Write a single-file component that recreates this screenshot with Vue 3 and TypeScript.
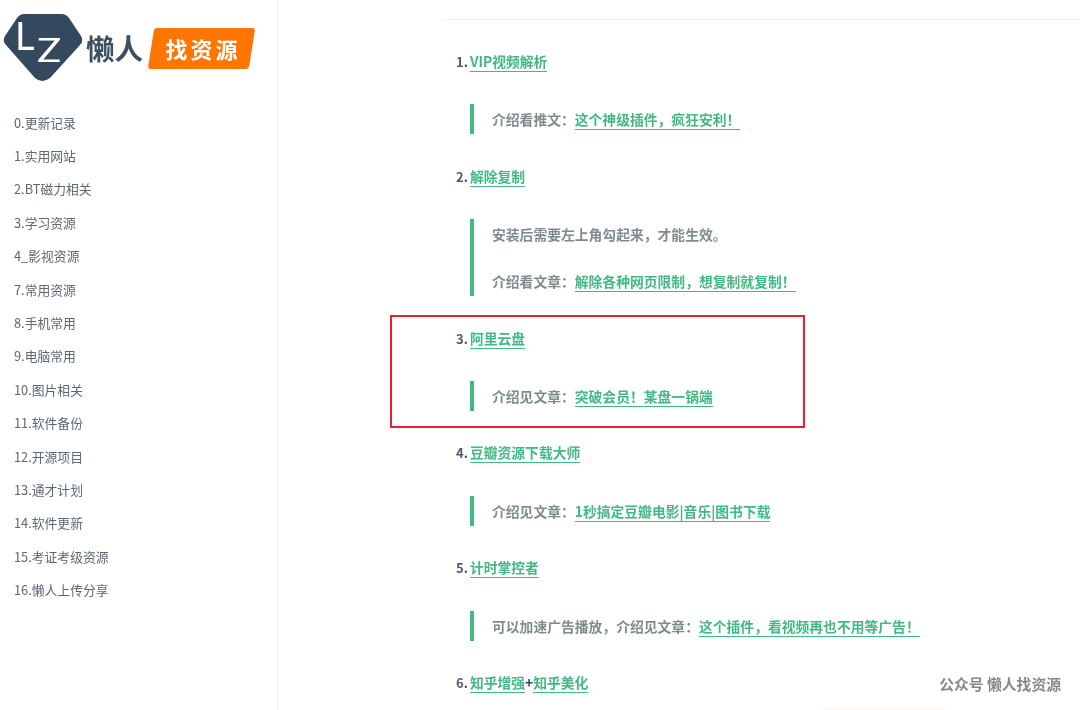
<script setup lang="ts">
interface Part { text: string; link?: boolean }
interface Entry { no: string; title: { text: string; link: boolean }[]; quotes: Part[][] }

const navItems: string[] = [
  '0.更新记录', '1.实用网站', '2.BT磁力相关', '3.学习资源', '4_影视资源', '7.常用资源',
  '8.手机常用', '9.电脑常用', '10.图片相关', '11.软件备份', '12.开源项目', '13.通才计划',
  '14.软件更新', '15.考证考级资源', '16.懒人上传分享',
]

const entries: Entry[] = [
  { no: '1.', title: [{ text: 'VIP视频解析', link: true }], quotes: [[{ text: '介绍看推文：' }, { text: '这个神级插件，疯狂安利！', link: true }]] },
  { no: '2.', title: [{ text: '解除复制', link: true }], quotes: [
    [{ text: '安装后需要左上角勾起来，才能生效。' }],
    [{ text: '介绍看文章：' }, { text: '解除各种网页限制，想复制就复制！', link: true }],
  ] },
  { no: '3.', title: [{ text: '阿里云盘', link: true }], quotes: [[{ text: '介绍见文章：' }, { text: '突破会员！某盘一锅端', link: true }]] },
  { no: '4.', title: [{ text: '豆瓣资源下载大师', link: true }], quotes: [[{ text: '介绍见文章：' }, { text: '1秒搞定豆瓣电影|音乐|图书下载', link: true }]] },
  { no: '5.', title: [{ text: '计时掌控者', link: true }], quotes: [[{ text: '可以加速广告播放，介绍见文章：' }, { text: '这个插件，看视频再也不用等广告！', link: true }]] },
  { no: '6.', title: [{ text: '知乎增强', link: true }, { text: '+', link: false }, { text: '知乎美化', link: true }], quotes: [] },
]
</script>

<template>
  <div class="page">
    <aside class="sidebar">
      <header class="brand">
        <svg class="gem" width="82" height="70" viewBox="0 0 82 70" aria-hidden="true">
          <path d="M22 1 H60 Q64 1 67 5 L79 23 Q82 28 78 32 L48 65 Q40 71 33 65 L4 32 Q0 28 3 23 L15 5 Q18 1 22 1 Z" fill="#34495e" />
          <text x="13" y="37" class="gem-l">L</text>
          <text class="gem-z" transform="translate(35 49) scale(1.22 1)">Z</text>
        </svg>
        <span class="brand-name">懒人</span>
        <span class="badge"><span class="badge-text">找资源</span></span>
      </header>
      <ul class="nav">
        <li v-for="item in navItems" :key="item">{{ item }}</li>
      </ul>
    </aside>

    <main class="content">
      <div class="inner">
        <section v-for="entry in entries" :key="entry.no" class="entry">
          <p class="title">
            <span class="no">{{ entry.no }}</span>
            <template v-for="part in entry.title" :key="part.text">
              <a v-if="part.link" class="link">{{ part.text }}</a>
              <span v-else class="plus">{{ part.text }}</span>
            </template>
          </p>
          <blockquote v-if="entry.quotes.length" class="quote">
            <p v-for="(line, i) in entry.quotes" :key="i">
              <template v-for="part in line" :key="part.text">
                <a v-if="part.link" class="link">{{ part.text }}</a>
                <span v-else>{{ part.text }}</span>
              </template>
            </p>
          </blockquote>
        </section>
      </div>
    </main>

    <div class="highlight"></div>
    <div class="watermark">公众号 懒人找资源</div>
    <div class="edge"></div>
  </div>
</template>

<style>
html, body { margin: 0; background: #fff; }
</style>

<style scoped>
.page {
  position: relative;
  display: flex;
  width: 1080px;
  height: 710px;
  overflow: hidden;
  background: #fff;
  font-family: "Noto Sans CJK SC", sans-serif;
  filter: blur(0.3px);
}
.sidebar {
  flex: none;
  width: 277px;
  border-right: 1px solid #eee;
}
.brand {
  display: flex;
  align-items: flex-start;
  height: 105.5px;
  padding: 13px 0 0 2px;
  box-sizing: border-box;
}
.gem { flex: none; }
.gem-l { font: 400 38px Lato, sans-serif; fill: #fff; }
.gem-z { font: 400 33px Lato, sans-serif; fill: #fff; }
.brand-name {
  margin: 15px 0 0 2px;
  font-size: 28.5px;
  font-weight: 700;
  line-height: 40px;
  color: #3d4f63;
}
.badge {
  display: block;
  width: 101px;
  height: 41px;
  margin: 15px 0 0 8px;
  border-radius: 3px;
  background: #ff7500;
  transform: skewX(-9deg);
  text-align: center;
}
.badge-text {
  display: block;
  padding-left: 3px;
  transform: skewX(9deg);
  font-size: 22px;
  font-weight: 700;
  line-height: 41px;
  letter-spacing: 3px;
  color: #fff;
}
.nav {
  margin: 0;
  padding: 0 0 0 14px;
  list-style: none;
  font-size: 12.8px;
  line-height: 33.4px;
  color: #5c6874;
}
.content {
  flex: 1;
  min-width: 0;
  padding-left: 164px;
}
.inner {
  height: 100%;
  border-top: 1px solid #f1f1f1;
  margin-top: 19px;
  padding: 29px 0 0 14px;
  font-size: 13.8px;
  font-weight: 700;
  color: #7f8c8d;
}
.entry { padding-bottom: 29.4px; }
.title {
  margin: 0;
  line-height: 24px;
  color: #34495e;
}
.no { font-weight: 700; margin-right: 2px; font-size: 13px; line-height: 1; color: #4a5c70; }
.plus { color: #34495e; }
.link {
  border-bottom: 1px solid #42b983;
  color: #42b983;
}
.quote {
  margin: 31.4px 0 0 14px;
  padding: 0 0 0 18px;
  border-left: 4px solid #42b983;
}
.quote p {
  margin: 17px 0 0;
  line-height: 30px;
}
.quote p:first-child { margin-top: 0; }
.highlight {
  position: absolute;
  left: 390px;
  top: 315px;
  width: 411px;
  height: 109px;
  border: 2px solid #e8212f;
}
.watermark {
  position: absolute;
  right: 19px;
  top: 674px;
  font-size: 14.8px;
  font-weight: 700;
  line-height: 20px;
  color: #888;
  background: #fff;
}
.edge {
  position: absolute;
  left: 823px;
  top: 709px;
  width: 122px;
  height: 1px;
  background: #fdf3ea;
}
</style>
